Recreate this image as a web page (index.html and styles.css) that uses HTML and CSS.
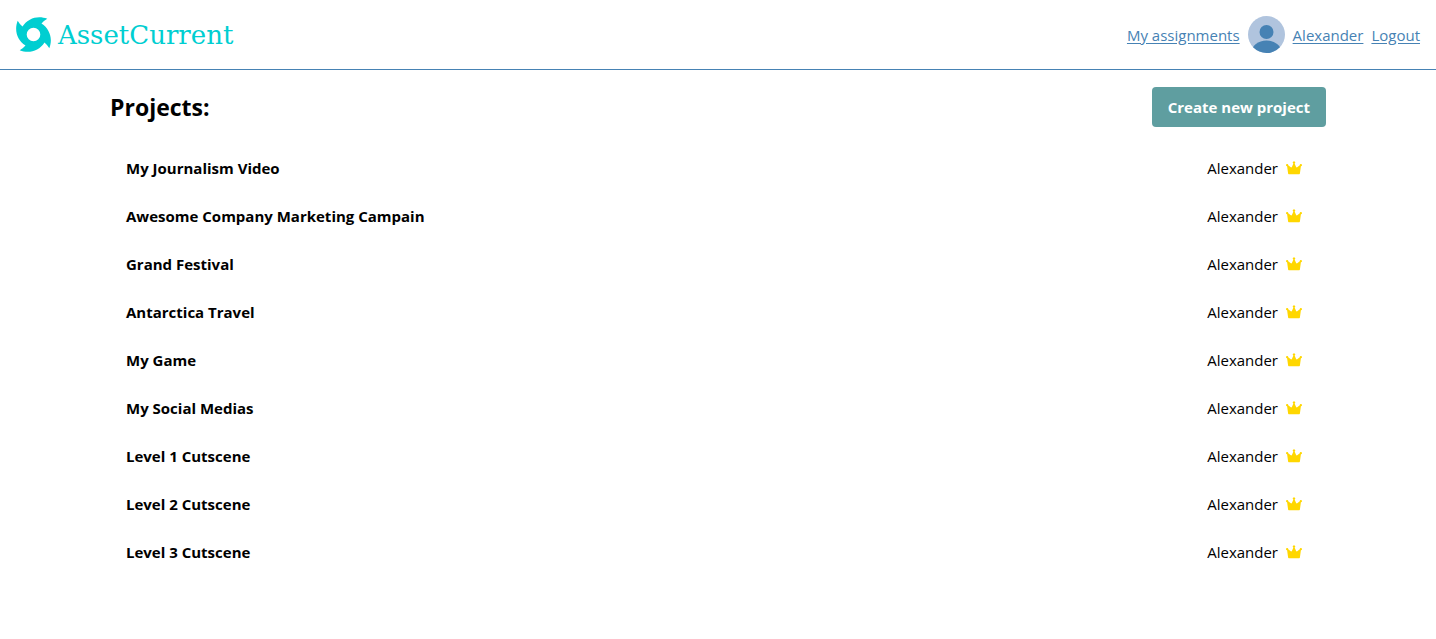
FILE: index.html
```
<!DOCTYPE html>
<html lang="en">
<head>
<meta charset="utf-8">
<title>AssetCurrent</title>
<link rel="stylesheet" href="styles.css">
</head>
<body>
<svg class="defs" aria-hidden="true">
  <symbol id="crown" viewBox="0 0 16 14">
    <path d="M2.800 13.300Q2.200 13.300 2.100 12.600L1.100 5.200A1.100 1.100 0 1 1 2.200 4.300L4.800 6.300Q5.500 6.600 5.900 5.900L7.400 2.500A1.200 1.200 0 1 1 8.600 2.500L10.100 5.900Q10.500 6.600 11.200 6.300L13.800 4.300A1.100 1.100 0 1 1 14.900 5.200L13.900 12.600Q13.800 13.300 13.200 13.300Z"/>
  </symbol>
</svg>
<header class="header">
  <a class="brand" href="#">
    <svg class="brand-icon" viewBox="0 0 35 35" aria-hidden="true"><path fill-rule="evenodd" d="M6.500 9.500C12 1 22-2 31.300 1.700Q28 3.500 25.500 6.500C34 12 37 22 33.300 31.300Q31.500 28 28.500 25.500C23 34 13 37 3.700 33.300Q7 31.500 9.500 28.500C1 23-2 13 1.700 3.700Q3.500 7 6.500 9.500ZM17.500 10.700a6.800 6.800 0 1 0 0 13.600a6.800 6.800 0 1 0 0-13.600Z"/></svg>
    <span>AssetCurrent</span>
  </a>
  <nav class="nav">
    <a href="#">My assignments</a>
    <svg class="avatar" viewBox="0 0 37 37" aria-hidden="true">
      <clipPath id="round"><circle cx="18.500" cy="18.500" r="18.500"/></clipPath>
      <g clip-path="url(#round)"><path class="avatar-back" d="M0 0h37v37H0Z"/><circle cx="18.500" cy="16" r="7"/><ellipse cx="18.500" cy="36.500" rx="15" ry="12"/></g>
    </svg>
    <a href="#">Alexander</a>
    <a href="#">Logout</a>
  </nav>
</header>
<main class="main">
  <div class="title-row">
    <h1>Projects:</h1>
    <button class="create" type="button">Create new project</button>
  </div>
  <ul class="projects">
    <li><strong>My Journalism Video</strong><span class="owner">Alexander <svg class="crown" aria-hidden="true"><use href="#crown"/></svg></span></li>
    <li><strong>Awesome Company Marketing Campain</strong><span class="owner">Alexander <svg class="crown" aria-hidden="true"><use href="#crown"/></svg></span></li>
    <li><strong>Grand Festival</strong><span class="owner">Alexander <svg class="crown" aria-hidden="true"><use href="#crown"/></svg></span></li>
    <li><strong>Antarctica Travel</strong><span class="owner">Alexander <svg class="crown" aria-hidden="true"><use href="#crown"/></svg></span></li>
    <li><strong>My Game</strong><span class="owner">Alexander <svg class="crown" aria-hidden="true"><use href="#crown"/></svg></span></li>
    <li><strong>My Social Medias</strong><span class="owner">Alexander <svg class="crown" aria-hidden="true"><use href="#crown"/></svg></span></li>
    <li><strong>Level 1 Cutscene</strong><span class="owner">Alexander <svg class="crown" aria-hidden="true"><use href="#crown"/></svg></span></li>
    <li><strong>Level 2 Cutscene</strong><span class="owner">Alexander <svg class="crown" aria-hidden="true"><use href="#crown"/></svg></span></li>
    <li><strong>Level 3 Cutscene</strong><span class="owner">Alexander <svg class="crown" aria-hidden="true"><use href="#crown"/></svg></span></li>
  </ul>
</main>
</body>
</html>
```
FILE: styles.css
```
* { box-sizing: border-box; }
body {
  margin: 0;
  background: white;
  color: black;
  font: 15px/24px "Segoe UI", "Open Sans", "Noto Sans", sans-serif;
}
.defs { display: none; }
.header {
  display: flex;
  align-items: center;
  justify-content: space-between;
  padding: 16px;
  border-bottom: 1px solid steelblue;
}
.brand {
  display: flex;
  align-items: center;
  gap: 7px;
  color: darkturquoise;
  font: 26px/36px Georgia, "DejaVu Serif", serif;
  text-decoration: none;
}
.brand-icon { width: 35px; height: 35px; fill: currentColor; }
.nav { display: flex; align-items: center; gap: 8px; }
.nav a { color: steelblue; text-underline-offset: 2px; }
.avatar { display: block; width: 37px; height: 37px; fill: steelblue; }
.avatar-back { fill: lightsteelblue; }
.main { max-width: 1248px; margin: 0 auto; padding: 17px 16px; }
.title-row {
  display: flex;
  align-items: center;
  justify-content: space-between;
  margin-bottom: 17px;
}
h1 { margin: 0; font-size: 23px; line-height: 32px; }
.create {
  height: 40px;
  padding: 0 16px;
  border: 0;
  border-radius: 4px;
  background: cadetblue;
  color: white;
  font: inherit;
  font-weight: bold;
}
.projects { margin: 0; padding: 0; list-style: none; }
.projects li {
  display: flex;
  align-items: center;
  justify-content: space-between;
  padding: 12px 24px 12px 16px;
}
.owner { display: flex; align-items: center; gap: 8px; }
.crown { width: 16px; height: 14px; fill: gold; }
```
